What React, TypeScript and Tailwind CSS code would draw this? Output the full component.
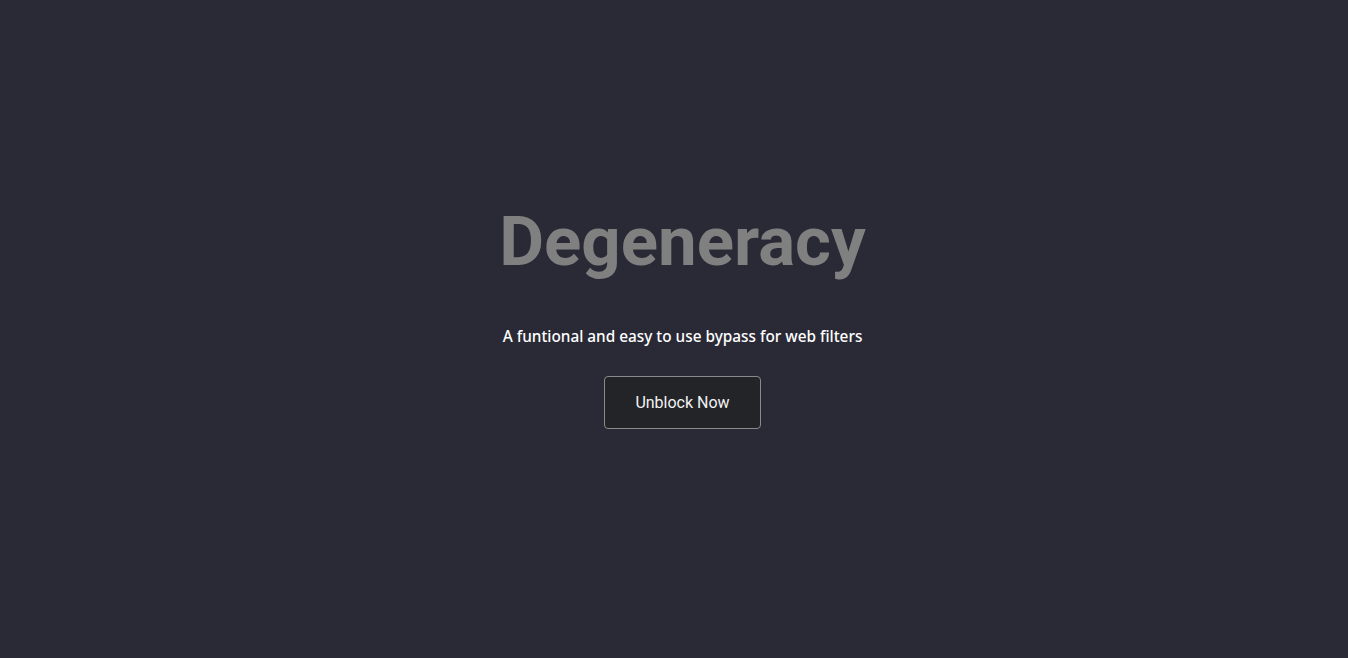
import React from 'react';

const App = () => {
    return (
        <div className="min-h-screen w-full bg-[#2a2a36] flex flex-col items-center justify-center pl-[17px]">
            <div className="flex flex-col items-center pb-[30px]">
                <h1 className="font-['Roboto',sans-serif] font-bold text-[69px] leading-[84px] text-[#808080]">
                    Degeneracy
                </h1>
                <p className="mt-[41px] font-['Noto_Sans','Open_Sans',sans-serif] font-medium text-[15.35px] leading-[22px] text-white">
                    A funtional and easy to use bypass for web filters
                </p>
                <button className="mt-[29px] w-[157px] h-[53px] pt-[1px] rounded-[4px] border border-[#8a8a8a] bg-[#222428] font-['Roboto',sans-serif] text-[16px] text-[#f2f2f2]">
                    Unblock Now
                </button>
            </div>
        </div>
    );
};

export default App;
